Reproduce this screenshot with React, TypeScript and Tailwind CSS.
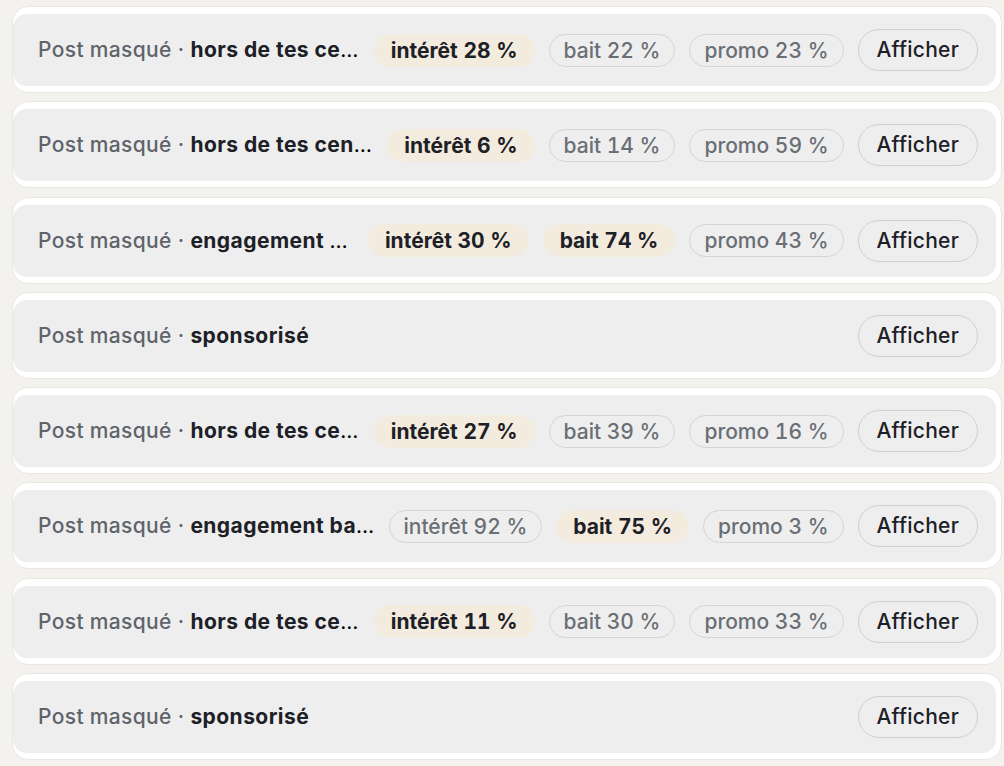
import React from "react";

type Chip = { label: string; active: boolean };
type Row = { reason: string; chips: Chip[] };

const rows: Row[] = [
  { reason: "hors de tes centres d'intérêt", chips: [
    { label: "intérêt 28 %", active: true },
    { label: "bait 22 %", active: false },
    { label: "promo 23 %", active: false },
  ] },
  { reason: "hors de tes centres d'intérêt", chips: [
    { label: "intérêt 6 %", active: true },
    { label: "bait 14 %", active: false },
    { label: "promo 59 %", active: false },
  ] },
  { reason: "engagement bait élevé", chips: [
    { label: "intérêt 30 %", active: true },
    { label: "bait 74 %", active: true },
    { label: "promo 43 %", active: false },
  ] },
  { reason: "sponsorisé", chips: [] },
  { reason: "hors de tes centres d'intérêt", chips: [
    { label: "intérêt 27 %", active: true },
    { label: "bait 39 %", active: false },
    { label: "promo 16 %", active: false },
  ] },
  { reason: "engagement bait élevé", chips: [
    { label: "intérêt 92 %", active: false },
    { label: "bait 75 %", active: true },
    { label: "promo 3 %", active: false },
  ] },
  { reason: "hors de tes centres d'intérêt", chips: [
    { label: "intérêt 11 %", active: true },
    { label: "bait 30 %", active: false },
    { label: "promo 33 %", active: false },
  ] },
  { reason: "sponsorisé", chips: [] },
];

function ChipView({ chip }: { chip: Chip }) {
  if (chip.active) {
    return (
      <span className="shrink-0 h-[33px] px-[17px] rounded-full bg-[#f3ebde] text-[#1d2026] font-bold text-[21px] tracking-normal leading-[33px] whitespace-nowrap tabular-nums">
        {chip.label}
      </span>
    );
  }
  return (
    <span className="shrink-0 h-[33px] px-[14px] rounded-full border border-[#d3d4d6] text-[#6a6e75] font-medium text-[21px] tracking-normal leading-[31px] whitespace-nowrap tabular-nums">
      {chip.label}
    </span>
  );
}

export default function App() {
  return (
    <div
      className="min-h-[766px] w-full bg-[#f3f2ef] pt-[6px] pl-[12px] pr-[2px] flex flex-col gap-[8.3px]"
      style={{ fontFamily: "Inter, 'Noto Sans', sans-serif" }}
    >
      {rows.map((row, i) => (
        <div
          key={i}
          className="bg-white border border-[#e9e7e2] rounded-[16px] pt-[7px] pb-[6px] pr-[5px]"
        >
          <div className="h-[72px] bg-[#eeeeee] rounded-[14px] pl-[25px] pr-[18px] flex items-center gap-[14px]">
            <div className="flex-1 min-w-0 truncate text-[21px] tracking-[0.35px] leading-[28px]">
              <span className="text-[#5f636a] font-medium">Post masqué · </span>
              <span className="text-[#1d2026] font-bold tracking-[0.45px]">{row.reason}</span>
            </div>
            {row.chips.map((c, j) => (
              <ChipView key={j} chip={c} />
            ))}
            <button className="shrink-0 h-[42px] px-[18px] rounded-full border border-[#d0d0d0] text-[#1d2026] font-medium text-[21px] tracking-[0.25px] leading-[40px]">
              Afficher
            </button>
          </div>
        </div>
      ))}
    </div>
  );
}
